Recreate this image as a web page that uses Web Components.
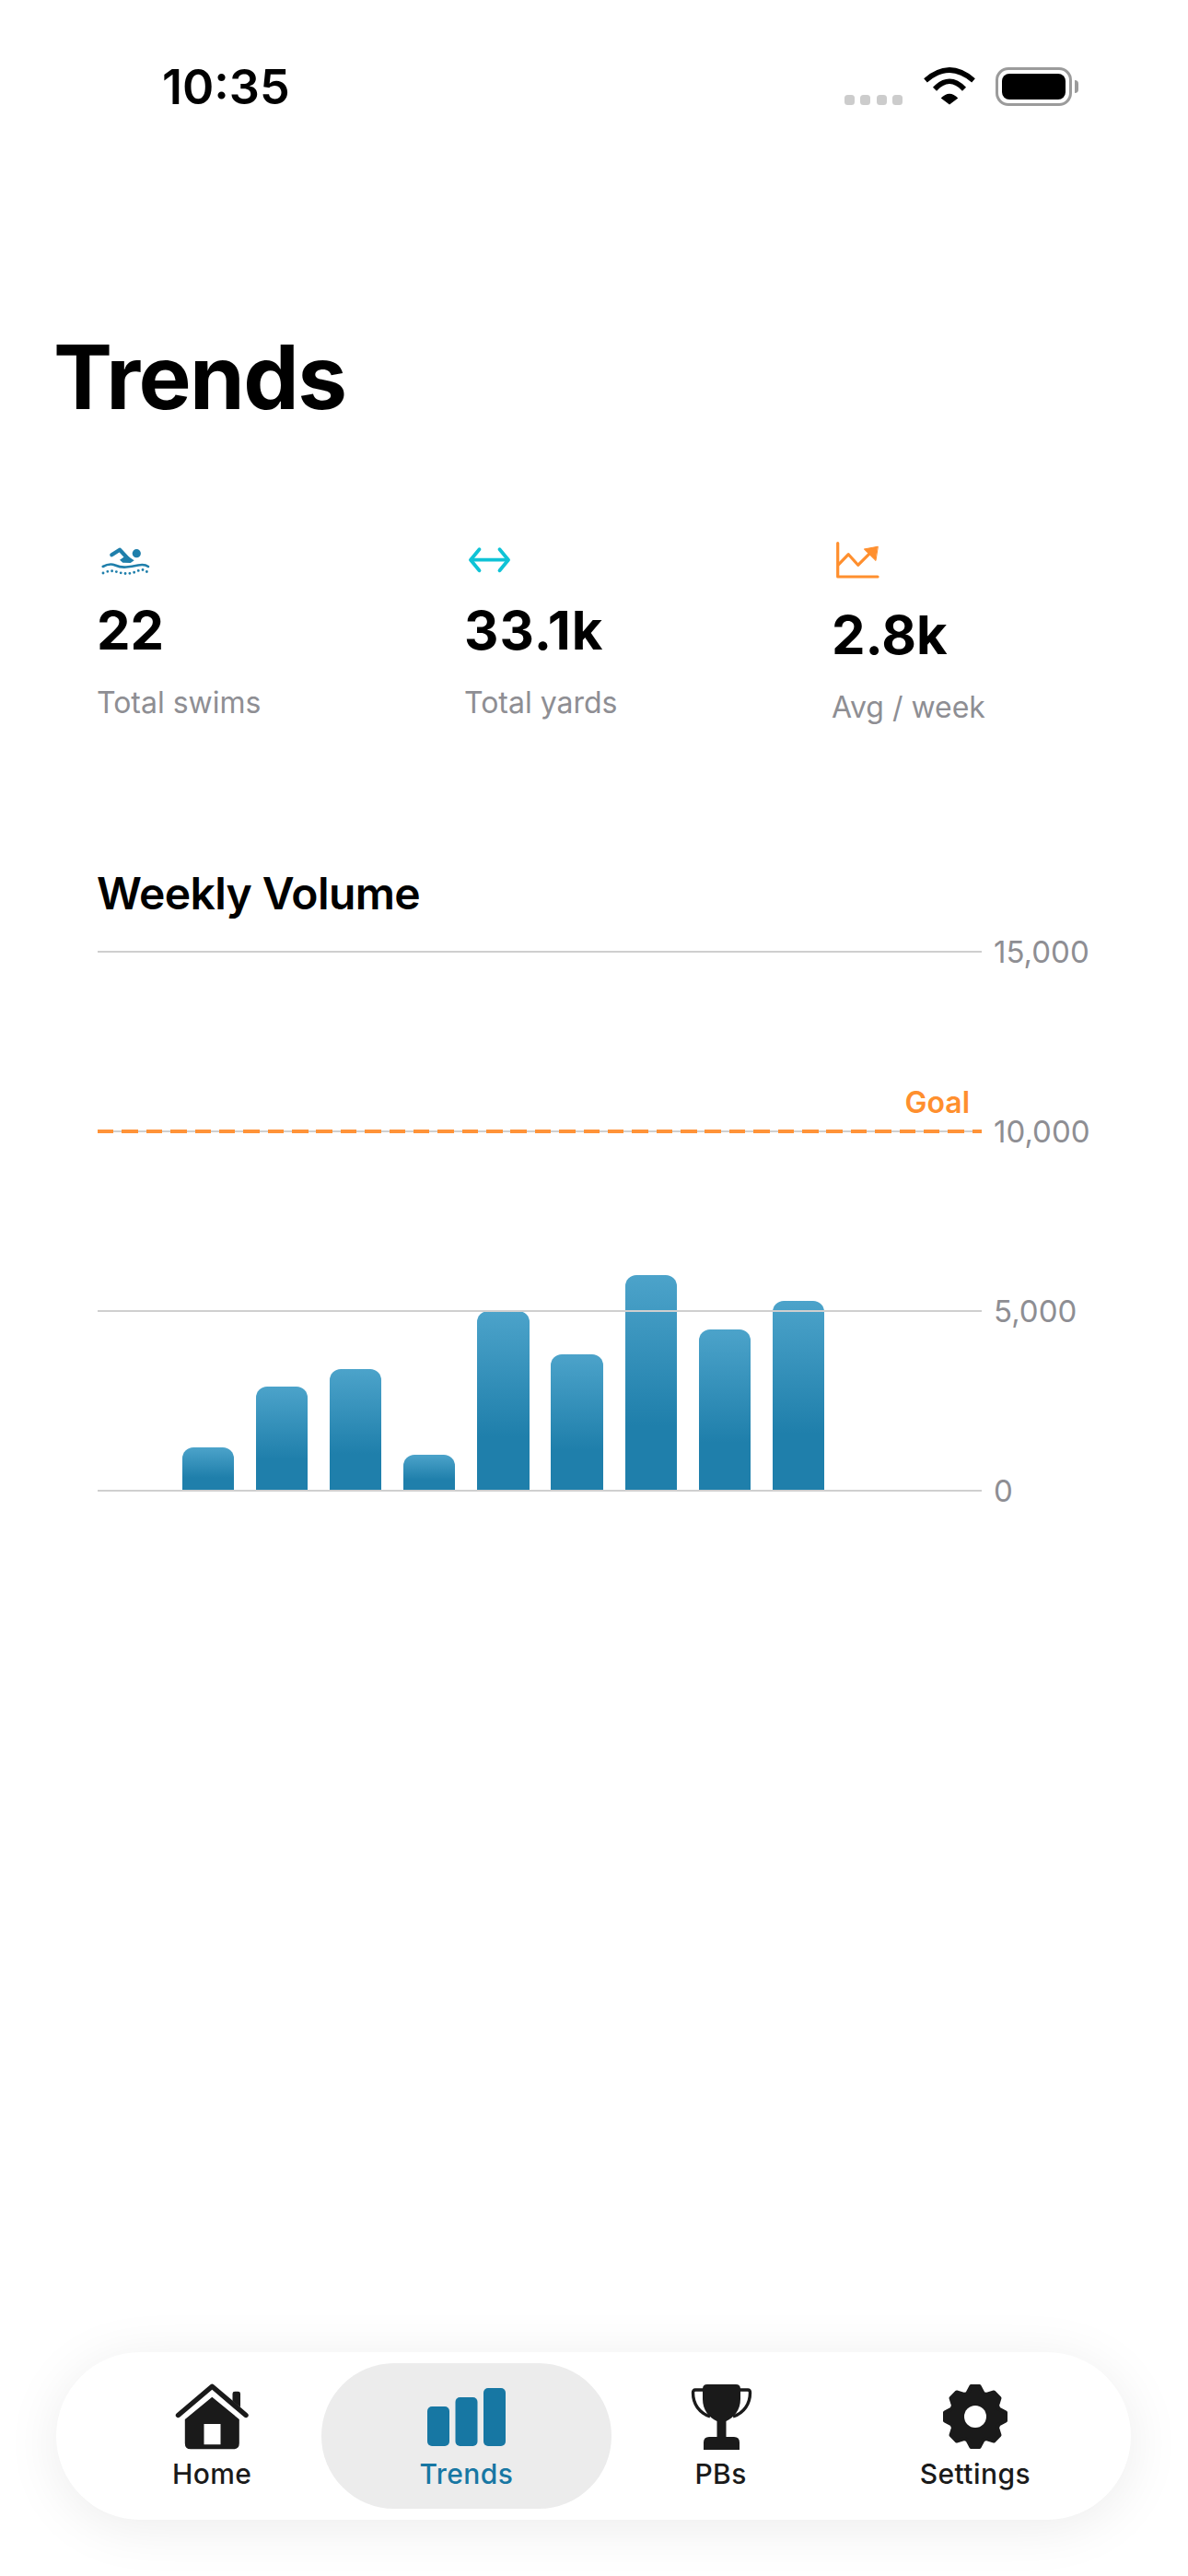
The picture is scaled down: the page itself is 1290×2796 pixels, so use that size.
<!DOCTYPE html>
<html lang="en">
<head>
<meta charset="utf-8">
<title>Trends</title>
<style>
    html, body { margin: 0; background: #fff; }
    body {
        width: 1290px;
        height: 2796px;
        overflow: hidden;
        display: flex;
        flex-direction: column;
        font-family: Inter, "Liberation Sans", sans-serif;
        color: #000;
    }
</style>
</head>
<body>
<status-bar time="10:35"></status-bar>
<page-title>Trends</page-title>

<stat-row>
    <stat-card value="22" label="Total swims">
        <svg slot="icon" width="60" height="44" viewBox="0 0 60 44" fill="none" stroke="#1f7fab" stroke-linecap="round" stroke-linejoin="round">
            <circle cx="43.3" cy="14.7" r="4.6" fill="#1f7fab" stroke="none"/>
            <path d="M16.3 16.3L25 10.7L34.3 20.7" stroke-width="4.2"/>
            <path d="M25 21.7L32.3 16.7L40.7 22.3L36.7 25L28.3 24.7Z" fill="#1f7fab" stroke="none"/>
            <path d="M6.7 29Q14 25 20 27.5T32 29.5T45 27.5T56 29" stroke-width="2.6"/>
            <path d="M7 36Q15 32.5 21 34.5T33 36.5T45 33.5T56 36" stroke-width="2.9" stroke-dasharray="0 4.9"/>
        </svg>
    </stat-card>
    <stat-card value="33.1k" label="Total yards" style="--value-spacing: 1px">
        <svg slot="icon" width="60" height="44" viewBox="0 0 60 44" fill="none" stroke="#0fc3d6" stroke-width="3.8" stroke-linecap="round" stroke-linejoin="round">
            <path d="M7.5 21.7H47.5"/>
            <path d="M16.5 10.2L7 21.7L16.5 33.2"/>
            <path d="M38.5 10.2L48 21.7L38.5 33.2"/>
        </svg>
    </stat-card>
    <stat-card value="2.8k" label="Avg / week">
        <svg slot="icon" width="60" height="49" viewBox="0 0 60 49" fill="none" stroke="#ff8f2e" stroke-width="3.2" stroke-linecap="round" stroke-linejoin="round">
            <path d="M6.7 3.5V40H50"/>
            <path d="M7.7 26.7L18.3 15.7L28.7 27.3L42.7 13.3"/>
            <path d="M50 7.3L35.3 10L47.7 22.3Z" fill="#ff8f2e" stroke-width="1"/>
        </svg>
    </stat-card>
</stat-row>

<volume-chart title-text="Weekly Volume"></volume-chart>

<tab-bar>
    <tab-item label="Home">
        <svg slot="icon" width="90" height="72" viewBox="0 0 90 72" fill="#1a1a1a">
            <path d="M8.5 34.5L45.3 3.2L82 34.5" fill="none" stroke="#1a1a1a" stroke-width="5.4" stroke-linecap="round" stroke-linejoin="round"/>
            <path d="M67.5 19V11Q67.5 8.7 70 8.7H73.5Q76 8.7 76 11V26Z"/>
            <path fill-rule="evenodd" d="M45.3 14.7L74.8 39V65Q74.8 71.3 68.5 71.3H22Q15.8 71.3 15.8 65V39ZM36.5 44V66.3H54.5V44Z"/>
        </svg>
    </tab-item>
    <tab-item label="Trends" active>
        <svg slot="icon" width="90" height="72" viewBox="0 0 90 72" fill="currentColor">
            <rect x="3" y="25" width="24" height="43" rx="5"/>
            <rect x="33.5" y="15" width="24" height="53" rx="5"/>
            <rect x="64" y="5" width="24" height="63" rx="5"/>
        </svg>
    </tab-item>
    <tab-item label="PBs">
        <svg slot="icon" width="90" height="72" viewBox="0 0 90 72" fill="#1a1a1a">
            <path d="M30 1H61Q66 1 66 6V17C66 29 59 37 50.5 41V58H59Q65 58 65 64V72H26V64Q26 58 32 58H40.5V41C32 37 25 29 25 17V6Q25 1 30 1Z"/>
            <path d="M26 7H17Q14.5 7 14.5 10C14.5 22 21 32 33 36M65 7H74Q76.5 7 76.5 10C76.5 22 70 32 58 36" fill="none" stroke="#1a1a1a" stroke-width="3.4"/>
        </svg>
    </tab-item>
    <tab-item label="Settings">
        <gear-icon slot="icon"></gear-icon>
    </tab-item>
</tab-bar>

<script>
// Barra de status do topo
class StatusBar extends HTMLElement {
    constructor() {
        super();
        this.attachShadow({ mode: 'open' });
    }

    connectedCallback() {
        this.shadowRoot.innerHTML = `
            <style>
                :host { display: flex; justify-content: space-between; align-items: flex-start; height: 64px; padding: 63px 119px 0 176px; }
                .time { font-size: 52px; line-height: 64px; font-weight: 600; }
                .icons { display: flex; align-items: flex-end; margin-top: 10px; }
                .dots { display: flex; gap: 6.3px; margin-right: 23px; margin-bottom: 1px; }
                .dots i { width: 11px; height: 11px; border-radius: 3.5px; background: #ccc; }
                svg { display: block; margin-right: 22px; margin-bottom: 1px; }
                .battery { box-sizing: border-box; width: 83px; height: 42px; border: 3px solid #9b9b9b; border-radius: 14px; padding: 4px; }
                .battery b { display: block; height: 100%; border-radius: 8px; background: #000; }
                .nub { width: 4px; height: 14px; margin: 0 0 14px 3px; border-radius: 0 7px 7px 0; background: #9b9b9b; }
            </style>
            <div class="time">${this.getAttribute('time')}</div>
            <div class="icons">
                <div class="dots"><i></i><i></i><i></i><i></i></div>
                <svg width="56" height="41" viewBox="0 0 56 41" fill="none" stroke="#000" stroke-width="5.6">
                    <path d="M2 14.3Q28 -8.3 54 14.3"/>
                    <path d="M12 23.7Q28 6.9 44 23.7"/>
                    <path d="M28 40.5L18.7 33.5Q28 24 37.3 33.5Z" fill="#000" stroke="none"/>
                </svg>
                <div class="battery"><b></b></div>
                <div class="nub"></div>
            </div>
        `;
    }
}
customElements.define('status-bar', StatusBar);

class PageTitle extends HTMLElement {
    constructor() {
        super();
        this.attachShadow({ mode: 'open' }).innerHTML = `
            <style>
                :host { display: block; margin-top: 224px; padding-left: 58px; font-size: 96px; line-height: 116px; font-weight: 700; letter-spacing: -1.5px; }
            </style>
            <slot></slot>
        `;
    }
}
customElements.define('page-title', PageTitle);

class StatRow extends HTMLElement {
    constructor() {
        super();
        this.attachShadow({ mode: 'open' }).innerHTML = `
            <style>
                :host { display: grid; grid-template-columns: repeat(3, 399px); align-items: start; margin-top: 119px; padding-left: 105px; height: 200px; }
            </style>
            <slot></slot>
        `;
    }
}
customElements.define('stat-row', StatRow);

// Um bloco de metrica: icone, valor e legenda
class StatCard extends HTMLElement {
    constructor() {
        super();
        this.attachShadow({ mode: 'open' });
    }

    connectedCallback() {
        this.shadowRoot.innerHTML = `
            <style>
                :host { display: block; }
                ::slotted(svg) { display: block; }
                .value { margin-top: 19px; font-size: 58px; line-height: 70px; font-weight: 700; letter-spacing: var(--value-spacing, 0); }
                .label { margin-top: 23.5px; font-size: 32px; line-height: 40px; color: #8e8e93; }
            </style>
            <slot name="icon"></slot>
            <div class="value">${this.getAttribute('value')}</div>
            <div class="label">${this.getAttribute('label')}</div>
        `;
    }
}
customElements.define('stat-card', StatCard);

// Grafico de volume semanal
class VolumeChart extends HTMLElement {
    constructor() {
        super();
        this.attachShadow({ mode: 'open' });
        this.values = [1205, 2900, 3385, 1000, 5000, 3795, 6000, 4487, 5282];
    }

    connectedCallback() {
        const bars = this.values.map(v => `<div class="bar" style="height:${Math.round(v * 0.039)}px"></div>`).join('');
        const rows = ['15,000', '10,000', '5,000', '0'].map(label => `
            <div class="row">
                <div class="line">${label === '10,000' ? '<div class="goal-label">Goal</div><div class="goal"></div>' : ''}</div>
                <div class="tick">${label}</div>
            </div>`).join('');
        this.shadowRoot.innerHTML = `
            <style>
                :host { display: block; margin-top: 155px; padding-left: 106px; }
                h2 { margin: 0 0 33px -1px; font-size: 48px; line-height: 58px; font-weight: 600; letter-spacing: -.6px; }
                .plot { display: grid; }
                .rows, .bars { grid-area: 1 / 1; }
                .rows { display: flex; flex-direction: column; justify-content: space-between; height: 587px; }
                .row { display: flex; align-items: center; height: 2px; }
                .line { position: relative; width: 960px; height: 2px; background: #cfcfcf; }
                .tick { margin-left: 13px; font-size: 33px; line-height: 2px; color: #8e8e93; }
                .goal { position: absolute; left: 0; right: 0; top: -1px; height: 4px;
                    background: repeating-linear-gradient(90deg, #ff9338 0 17.5px, transparent 17.5px 26.38px); }
                .goal-label { position: absolute; right: 13px; bottom: 12px; font-size: 32px; line-height: 40px; font-weight: 600; color: #ff8f2e; }
                .bars { display: flex; align-items: flex-end; gap: 23.8px; width: 960px; height: 586px; padding-left: 91.5px; box-sizing: border-box; }
                .bar { width: 56.4px; border-radius: 12px 12px 0 0; background: linear-gradient(180deg, #4ca3ca 0, #1f7fab 70%); }
            </style>
            <h2>${this.getAttribute('title-text')}</h2>
            <div class="plot">
                <div class="rows">${rows}</div>
                <div class="bars">${bars}</div>
            </div>
        `;
    }
}
customElements.define('volume-chart', VolumeChart);

class TabBar extends HTMLElement {
    constructor() {
        super();
        this.attachShadow({ mode: 'open' }).innerHTML = `
            <style>
                :host { display: flex; box-sizing: border-box; height: 182px; margin: auto 62px 61px 61px; padding: 12px 31px; border-radius: 91px; background: #fff; box-shadow: 0 8px 60px rgba(0, 0, 0, .08); }
            </style>
            <slot></slot>
        `;
    }
}
customElements.define('tab-bar', TabBar);

class TabItem extends HTMLElement {
    constructor() {
        super();
        this.attachShadow({ mode: 'open' });
    }

    connectedCallback() {
        this.shadowRoot.innerHTML = `
            <style>
                :host { position: relative; flex: 1; display: flex; flex-direction: column; align-items: center; padding-top: 22px; color: #1a1a1a; }
                :host([active]) { color: #1777a3; }
                :host([active])::before { content: ""; position: absolute; inset: 0 -19px; border-radius: 79px; background: #ececec; }
                ::slotted(*) { position: relative; display: block; }
                .label { position: relative; margin-top: 8px; font-size: 30px; line-height: 36px; font-weight: 500; letter-spacing: .4px; }
            </style>
            <slot name="icon"></slot>
            <div class="label">${this.getAttribute('label')}</div>
        `;
    }
}
customElements.define('tab-item', TabItem);

// Engrenagem de 8 dentes, gerada por angulo
class GearIcon extends HTMLElement {
    constructor() {
        super();
        this.attachShadow({ mode: 'open' });
    }

    connectedCallback() {
        const cx = 45, cy = 36, pts = [];
        for (let i = 0; i < 8; i++) {
            const a = i * Math.PI / 4;
            const at = (r, w) => {
                const x = cx + r * Math.sin(a) + w * Math.cos(a);
                const y = cy - r * Math.cos(a) + w * Math.sin(a);
                return `${x.toFixed(1)} ${y.toFixed(1)}`;
            };
            pts.push(at(25.5, -8.5), at(33, -4.5), at(33, 4.5), at(25.5, 8.5));
        }
        const body = 'M' + pts.join('L') + 'Z';
        const hole = `M${cx - 12} ${cy}a12 12 0 1 0 24 0a12 12 0 1 0 -24 0Z`;
        this.shadowRoot.innerHTML = `
            <style>
                :host { display: block; width: 90px; height: 72px; }
                svg { display: block; }
            </style>
            <svg width="90" height="72" viewBox="0 0 90 72">
                <path d="${body}" fill="#1a1a1a" stroke="#1a1a1a" stroke-width="4" stroke-linejoin="round"/>
                <path d="${hole}" fill="#fff"/>
            </svg>
        `;
    }
}
customElements.define('gear-icon', GearIcon);
</script>
</body>
</html>
